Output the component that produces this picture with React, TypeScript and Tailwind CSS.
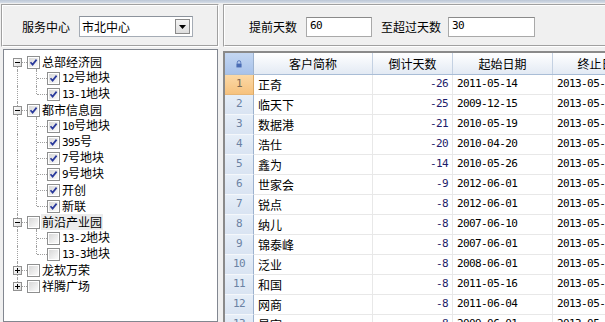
import React from "react";

type TreeNode = {
  label: string;
  level: 0 | 1;
  checked: boolean;
  expanded?: boolean;
  firstRoot?: boolean;
  lastRoot?: boolean;
  lastChild?: boolean;
  selected?: boolean;
};

const tree: TreeNode[] = [
  { label: "总部经济园", level: 0, checked: true, expanded: true, firstRoot: true },
  { label: "12号地块", level: 1, checked: true },
  { label: "13-1地块", level: 1, checked: true, lastChild: true },
  { label: "都市信息园", level: 0, checked: true, expanded: true },
  { label: "10号地块", level: 1, checked: true },
  { label: "395号", level: 1, checked: true },
  { label: "7号地块", level: 1, checked: true },
  { label: "9号地块", level: 1, checked: true },
  { label: "开创", level: 1, checked: true },
  { label: "新联", level: 1, checked: true, lastChild: true },
  { label: "前沿产业园", level: 0, checked: false, expanded: true, selected: true },
  { label: "13-2地块", level: 1, checked: false },
  { label: "13-3地块", level: 1, checked: false, lastChild: true },
  { label: "龙软万荣", level: 0, checked: false, expanded: false },
  { label: "祥腾广场", level: 0, checked: false, expanded: false, lastRoot: true },
];

const rows = [
  ["正奇", "-26", "2011-05-14", "2013-05-14"],
  ["临天下", "-25", "2009-12-15", "2013-05-15"],
  ["数据港", "-21", "2010-05-19", "2013-05-19"],
  ["浩仕", "-20", "2010-04-20", "2013-05-20"],
  ["鑫为", "-14", "2010-05-26", "2013-05-26"],
  ["世家会", "-9", "2012-06-01", "2013-05-31"],
  ["锐点", "-8", "2012-06-01", "2013-05-31"],
  ["纳儿", "-8", "2007-06-10", "2013-05-31"],
  ["锦泰峰", "-8", "2007-06-01", "2013-05-31"],
  ["泛业", "-8", "2008-06-01", "2013-05-31"],
  ["和国", "-8", "2011-05-16", "2013-05-31"],
  ["网商", "-8", "2011-06-04", "2013-05-31"],
  ["星宇", "-8", "2009-06-01", "2013-05-31"],
];

const mono = "font-['DejaVu_Sans_Mono',monospace] text-[11px] tracking-[-0.6px]";

// digits in the old bitmap font are half width, so render ascii runs in a small mono face
const Mixed = ({ text }: { text: string }) => (
  <>
    {text.split(/([0-9\-]+)/).map((p, i) =>
      /^[0-9\-]+$/.test(p) ? (
        <span key={i} className={mono}>
          {p}
        </span>
      ) : (
        <span key={i}>{p}</span>
      )
    )}
  </>
);

const CheckBox = ({ checked }: { checked: boolean }) => (
  <div className="relative z-10 w-[13px] h-[13px] border border-[#8e8f8f] bg-white p-[1px] shrink-0">
    <div className="w-full h-full bg-gradient-to-br from-[#d8d8d8] to-[#fbfbfb]">
      {checked && (
        <svg viewBox="0 0 9 9" className="w-[9px] h-[9px]">
          <path d="M1.5 4.2 L3.6 6.6 L7.6 1.6" fill="none" stroke="#2a3a9c" strokeWidth="1.7" />
        </svg>
      )}
    </div>
  </div>
);

const ExpandBox = ({ open }: { open: boolean }) => (
  <div className="relative z-10 w-[9px] h-[9px] border border-[#919191] bg-gradient-to-br from-white to-[#dcdcdc] flex items-center justify-center shrink-0">
    <div className="absolute w-[5px] h-[1px] bg-[#000000]" />
    {!open && <div className="absolute w-[1px] h-[5px] bg-[#000000]" />}
  </div>
);

const TreeRow = ({ n }: { n: TreeNode }) => {
  const dots = "absolute border-dotted border-[#a0a0a0]";
  return (
    <div className="relative h-4 flex items-center">
      {/* root guide line */}
      <div
        className={`${dots} left-[13px] border-l ${n.level === 0 && n.firstRoot ? "top-1/2" : "top-0"} ${
          n.level === 0 && n.lastRoot ? "bottom-1/2" : "bottom-0"
        }`}
      />
      {n.level === 0 && n.expanded && <div className={`${dots} left-[32px] border-l top-1/2 bottom-0`} />}
      {n.level === 1 && (
        <>
          <div className={`${dots} left-[32px] border-l top-0 ${n.lastChild ? "bottom-1/2" : "bottom-0"}`} />
          <div className={`${dots} left-[33px] w-[10px] top-1/2 border-t`} />
        </>
      )}
      {n.level === 0 ? (
        <div className="flex items-center ml-[9px]">
          <ExpandBox open={!!n.expanded} />
          <div className="w-[5px] border-t border-dotted border-[#a0a0a0]" />
          <CheckBox checked={n.checked} />
          <span className={`ml-[1px] px-[1px] leading-4 ${n.selected ? "bg-[#ececec]" : ""}`}>
            <Mixed text={n.label} />
          </span>
        </div>
      ) : (
        <div className="flex items-center ml-[43px]">
          <CheckBox checked={n.checked} />
          <span className="ml-[2px] leading-4">
            <Mixed text={n.label} />
          </span>
        </div>
      )}
    </div>
  );
};

const Panel = ({ children, className = "" }: { children: React.ReactNode; className?: string }) => (
  <div className={`border-t border-l border-[#a0a0a0] border-r-white border-b-white border-r border-b ${className}`}>
    <div className="h-full border-t border-l border-white border-r border-b border-r-[#a0a0a0] border-b-[#a0a0a0] flex items-center">
      {children}
    </div>
  </div>
);

const colW = ["w-[119px]", "w-[80px]", "w-[100px]", "w-[98px]"];
const heads = ["客户简称", "倒计天数", "起始日期", "终止日期"];

export default function App() {
  return (
    <div className="w-[605px] h-[322px] bg-[#f0f0f0] overflow-hidden flex flex-col font-['Noto_Sans_CJK_SC',sans-serif] text-[12px] text-[#000000]">
      <div className="h-[3px] bg-gradient-to-b from-[#bcc7d6] to-[#d6dde7] shrink-0" />
      <div className="flex-1 flex pl-[1px] pt-[1px] gap-[4px] min-h-0">
        {/* left column */}
        <div className="w-[218px] flex flex-col shrink-0">
          <Panel className="h-[43px] shrink-0">
            <div className="flex items-center pl-[19px] pt-[2px]">
              <span>服务中心</span>
              <div className="ml-[9px] w-[114px] h-[21px] border border-[#a5acb5] border-t-[#8c939c] bg-white flex items-center pl-[2px] pr-[2px]">
                <span className="flex-1">市北中心</span>
                <div className="w-[15px] h-[15px] border border-[#8a8a8a] bg-gradient-to-b from-[#f4f4f4] to-[#dedede] flex items-center justify-center">
                  <svg viewBox="0 0 7 4" className="w-[7px] h-[4px] mt-[1px]">
                    <path d="M0 0 H7 L3.5 4 Z" fill="#000" />
                  </svg>
                </div>
              </div>
            </div>
          </Panel>
          <div className="mt-[2px] ml-[2px] mr-[1px] flex-1 bg-white border border-[#828790] pt-[4px] overflow-hidden">
            {tree.map((n) => (
              <TreeRow key={n.label} n={n} />
            ))}
          </div>
        </div>

        {/* right column */}
        <div className="flex-1 flex flex-col min-w-0 overflow-hidden">
          <Panel className="h-[43px] shrink-0 w-[400px]">
            <div className="flex items-center pl-[24px] pt-[2px] whitespace-nowrap">
              <span>提前天数</span>
              <div className={`ml-[9px] w-[66px] h-[20px] border border-[#a9a9a9] border-t-[#8a8a8a] bg-white flex items-center pl-[3px] ${mono}`}>
                60
              </div>
              <span className="ml-[9px]">至超过天数</span>
              <div className={`ml-[7px] w-[87px] h-[20px] border border-[#a9a9a9] border-t-[#8a8a8a] bg-white flex items-center pl-[3px] ${mono}`}>
                30
              </div>
            </div>
          </Panel>

          <div className="mt-[4px] flex-1 w-[430px] border-t-2 border-l-2 border-t-[#8a8a8a] border-l-[#8a8a8a] bg-white overflow-hidden">
            <div className="flex h-[22px] border-b border-[#a9bdd6]">
              <div className="w-[29px] shrink-0 bg-gradient-to-b from-[#c4d7f2] to-[#a8c2ea] border-r border-[#9cb2cf] flex items-center justify-center">
                <svg viewBox="0 0 7 9" className="w-[6px] h-[8px]">
                  <path d="M1.5 4 V2.6 A2 2 0 0 1 5.5 2.6 V4" fill="none" stroke="#4a6cb4" strokeWidth="1" />
                  <rect x="0.5" y="4" width="6" height="4.5" fill="#4a6cb4" />
                </svg>
              </div>
              {heads.map((h, i) => (
                <div
                  key={h}
                  className={`${colW[i]} shrink-0 bg-gradient-to-b from-white to-[#e3eaf4] border-r border-[#c4d1e2] flex items-center justify-center`}
                >
                  {h}
                </div>
              ))}
            </div>
            {rows.map((r, i) => (
              <div key={i} className="flex h-[20px]">
                <div
                  className={`w-[29px] shrink-0 border-r border-b flex items-center justify-center ${mono} ${
                    i === 0
                      ? "bg-gradient-to-b from-[#fcd9a6] to-[#f6c27e] border-r-[#d9a866] border-b-[#e6b678] text-[#7a6a55]"
                      : "bg-gradient-to-b from-[#e6eef8] to-[#d9e4f2] border-r-[#9cb2cf] border-b-[#f4f7fb] text-[#6b82a3]"
                  }`}
                >
                  {i + 1}
                </div>
                <div className={`${colW[0]} shrink-0 border-r border-b border-[#e8e8e8] flex items-center pl-[4px]`}>{r[0]}</div>
                <div className={`${colW[1]} shrink-0 border-r border-b border-[#e8e8e8] flex items-center justify-end pr-[4px] text-[#1c1c6a] ${mono}`}>
                  {r[1]}
                </div>
                <div className={`${colW[2]} shrink-0 border-r border-b border-[#e8e8e8] flex items-center pl-[4px] ${mono}`}>{r[2]}</div>
                <div className={`${colW[3]} shrink-0 border-r border-b border-[#e8e8e8] flex items-center pl-[4px] ${mono}`}>{r[3]}</div>
              </div>
            ))}
          </div>
        </div>
      </div>
    </div>
  );
}
